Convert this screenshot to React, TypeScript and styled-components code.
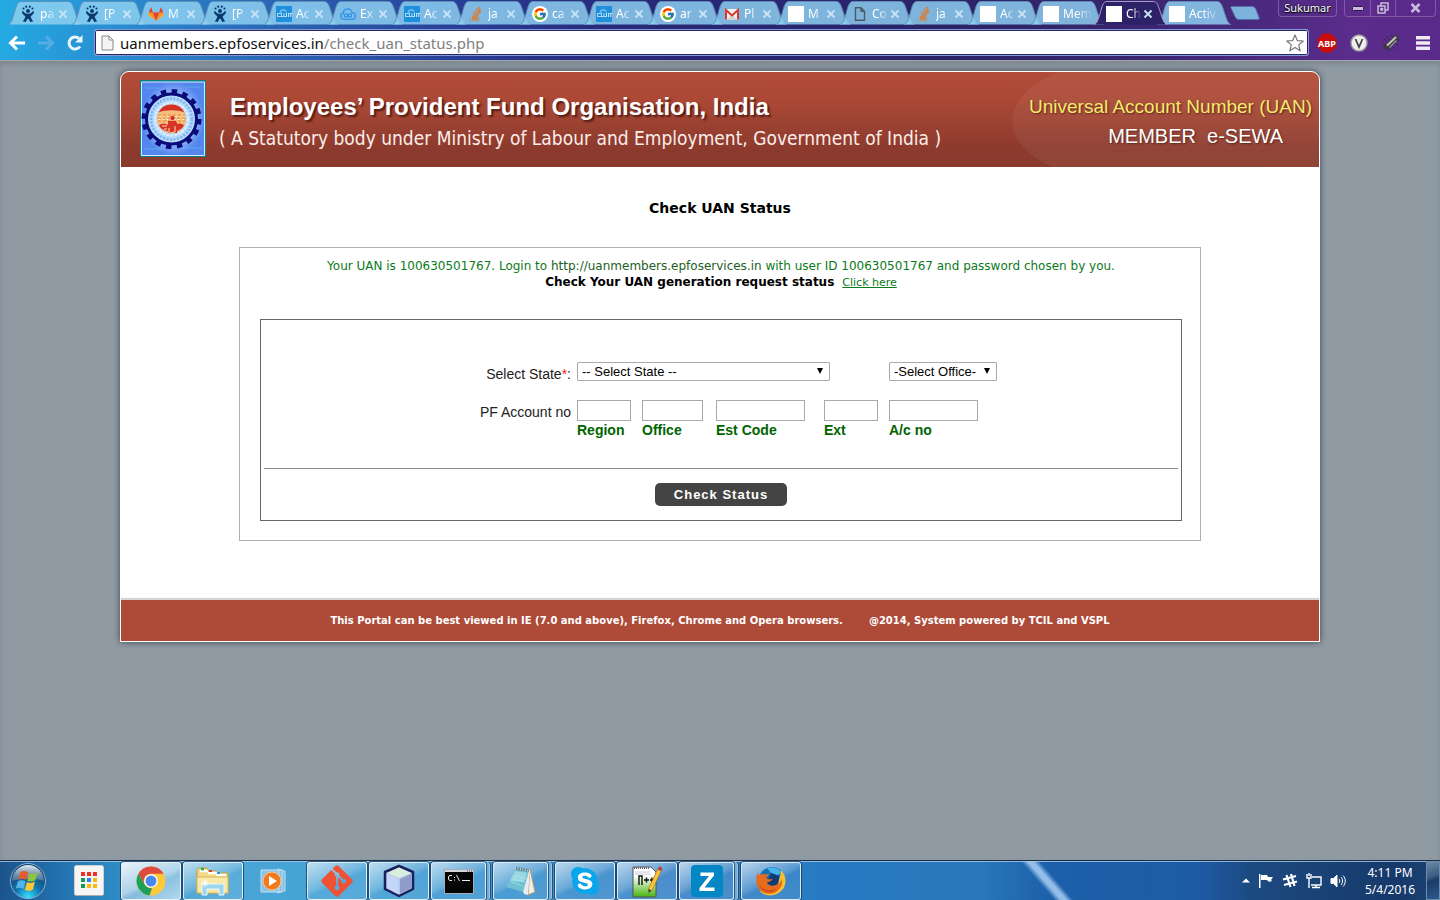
import React from "react";
import styled, { createGlobalStyle, css } from "styled-components";
import { FcGoogle } from "react-icons/fc";
import { FaGitAlt, FaSkype } from "react-icons/fa";

const ui = `"Noto Sans", "Open Sans", sans-serif`;
const arial = `"Liberation Sans", Arial, sans-serif`;
const verdana = `"DejaVu Sans", Verdana, sans-serif`;
const lucida = `"DejaVu Sans Condensed", "Lucida Sans", sans-serif`;

const GlobalStyle = createGlobalStyle`
  *, *::before, *::after { box-sizing: border-box; }
  body { margin: 0; background: #8f9aa3; }
  button, input, select { font: inherit; margin: 0; padding: 0; border: 0; background: none; color: inherit; }
  svg { display: block; flex: none; }
`;

const Screen = styled.div`
  min-height: 100vh;
  display: flex;
  flex-direction: column;
`;

/* ---------- browser frame ---------- */

const BrowserFrame = styled.header`
  background: linear-gradient(90deg, #24aae2 0%, #2a86cc 10%, #2a58aa 23%, #283c94 33%, #28287a 43%, #2a2368 65%, #35246c 76%, #4c2a80 88%, #5b2c8c 94%, #5a2a8a 100%);
  border-bottom: 1px solid #a3a3a8;
  font-family: ${ui};
`;

const TabStrip = styled.div`
  display: flex;
  height: 25px;
  padding-left: 8px;
`;

const Tab = styled.button<{ $active?: boolean; $narrow?: boolean; $open?: boolean }>`
  position: relative;
  flex: 0 0 auto;
  width: ${(p) => (p.$narrow ? 73 : 74)}px;
  height: 25px;
  margin-right: -10px;
  padding: 2px ${(p) => (p.$open ? 8 : 14)}px 0 12px;
  display: flex;
  align-items: center;
  z-index: ${(p) => (p.$active ? 2 : 1)};
  text-align: left;
`;

const TabShape = styled.svg`
  position: absolute;
  inset: 0;
  width: 100%;
  height: 100%;
  z-index: -1;
`;

const TabTitle = styled.span`
  flex: 1 1 0;
  min-width: 0;
  margin: 0 1px 0 4px;
  overflow: hidden;
  white-space: nowrap;
  font-size: 12px;
  line-height: 18px;
  color: #fff;
  mask-image: linear-gradient(90deg, #000 40%, transparent 95%);
`;

const NewTab = styled.button`
  width: 30px;
  height: 14px;
  margin: 6px 0 0 9px;
`;

const WindowTools = styled.div`
  display: flex;
  align-items: flex-start;
  gap: 7px;
  margin-left: auto;
  padding-right: 4px;
`;

const frameButton = css`
  border: 1px solid #7d5aa4;
  border-top: 0;
  color: #d8cdea;
  height: 17px;
`;

const UserButton = styled.button`
  ${frameButton}
  width: 59px;
  border-radius: 0 0 4px 4px;
  color: #fff;
  font-size: 11px;
  line-height: 16px;
  text-shadow: 0 0 2px #000, 0 1px 1px #000;
`;

const WindowButtons = styled.div`
  ${frameButton}
  display: flex;
  border-radius: 0 0 4px 4px;
`;

const WindowButton = styled.button<{ $wide?: boolean }>`
  width: ${(p) => (p.$wide ? 40 : 25)}px;
  display: grid;
  place-items: center;
  & + & { border-left: 1px solid #7d5aa4; }
`;

const Toolbar = styled.div`
  display: flex;
  align-items: center;
  height: 35px;
  padding: 0 7px;
`;

const NavButton = styled.button`
  width: 20px;
  height: 20px;
  margin-right: 9px;
  display: grid;
  place-items: center;
`;

const AddressBar = styled.div`
  flex: 1;
  height: 27px;
  display: flex;
  align-items: center;
  gap: 6px;
  padding: 0 3px 0 6px;
  background: #fff;
  border: 1px solid #7f9bd0;
  border-radius: 3px;
  box-shadow: inset 0 0 0 1px #2a2468;
`;

const Url = styled.span`
  flex: 1;
  font-size: 15px;
  line-height: 20px;
  color: #808080;
  b { font-weight: 400; color: #111; }
`;

const IconButton = styled.button`
  width: 20px;
  height: 20px;
  display: grid;
  place-items: center;
`;

const Extensions = styled.div`
  display: flex;
  gap: 12px;
  margin-left: 8px;
`;

/* ---------- portal page ---------- */

const PageArea = styled.main`
  flex: 1;
  padding: 10px 24px;
  box-shadow: inset 0 3px 4px rgba(70, 80, 90, 0.25);
`;

const Sheet = styled.div`
  max-width: 1200px;
  margin: 0 auto;
  background: #fff;
  border: 1px solid #fff;
  border-radius: 9px 9px 0 0;
  box-shadow: 0 0 6px rgba(30, 40, 50, 0.75);
`;

const Banner = styled.header`
  display: flex;
  min-height: 95px;
  background: linear-gradient(#b04c38 0%, #ac4936 28%, #8b3a2d 82%, #8b3a2d 100%);
  border-radius: 8px 8px 0 0;
  overflow: hidden;
  color: #fff;
`;

const LogoLink = styled.a`
  margin: 8px 0 0 19px;
  height: 77px;
`;

const BannerText = styled.div`
  flex: 1;
  padding: 20px 0 0 13px;
  white-space: nowrap;
`;

const OrgName = styled.h1`
  margin: 0 0 3px;
  padding-left: 11px;
  font: 700 24px/30px ${arial};
  text-shadow: 2px 2px 2px rgba(50, 10, 5, 0.7);
`;

const OrgNote = styled.p`
  margin: 0;
  font: 400 19px/26px ${lucida};
  color: #fbeeea;
`;

const Sewa = styled.div`
  width: 307px;
  padding: 21px 7px 0 0;
  text-align: right;
  white-space: pre;
  text-shadow: 1px 1px 2px rgba(50, 10, 5, 0.6);
  background:
    radial-gradient(110px 60px at 110px 49px, rgba(255, 255, 255, 0.05) 99%, transparent 100%) 0 0 / 110px 100% no-repeat,
    linear-gradient(rgba(255, 255, 255, 0.05), rgba(255, 255, 255, 0.05)) 110px 0 no-repeat;
`;

const SewaTitle = styled.p`
  margin: 0;
  font: 400 19px/28px ${arial};
  color: #f3ea6c;
`;

const SewaName = styled.p`
  margin: 0;
  padding-right: 29px;
  font: 400 20px/30px ${arial};
`;

const Content = styled.section`
  padding: 32px 24px 59px;
`;

const PageTitle = styled.h2`
  margin: 0 0 30px;
  text-align: center;
  font: 700 14px/18px ${verdana};
  color: #000;
`;

const Panel = styled.div`
  max-width: 962px;
  margin: 0 auto;
  padding: 10px 18px 19px 20px;
  border: 1px solid #b0b0b0;
`;

const Message = styled.p`
  margin: 0;
  text-align: center;
  font: 400 12px/16px ${verdana};
  color: #0b7a1c;
  span { color: #22601f; }
  strong { color: #000; margin-right: 8px; }
  a { color: #0b7a1c; font-size: 11px; line-height: 12px; }
`;

const FormBox = styled.form`
  margin-top: 29px;
  padding: 42px 3px 14px;
  border: 1px solid #666;
  font: 400 14px/18px ${arial};
  color: #222;
`;

const Fields = styled.div`
  display: grid;
  grid-template-columns: 79fr 65px 74px 108px 65px 108px 46fr;
  margin: 0 -3px;
  row-gap: 17px;
`;

const RowLabel = styled.label`
  padding: 3px 6px 0 0;
  text-align: right;
  i { font-style: normal; color: #e22; }
`;

const SelectWrap = styled.div<{ $from: number; $to: number; $width: number }>`
  position: relative;
  grid-column: ${(p) => p.$from} / ${(p) => p.$to};
  width: ${(p) => p.$width}px;
  height: 19px;
  select {
    appearance: none;
    display: block;
    width: 100%;
    height: 19px;
    padding: 0 16px 0 4px;
    border: 1px solid #a9a9a9;
    border-radius: 1px;
    background: #fff;
    color: #000;
    font: 400 13px/17px ${arial};
  }
  svg { position: absolute; right: 7px; top: 6px; pointer-events: none; }
`;

const Field = styled.label<{ $width: number }>`
  font: 700 14px/18px ${arial};
  color: #006400;
  white-space: nowrap;
  input {
    display: block;
    width: ${(p) => p.$width}px;
    height: 21px;
    padding: 1px 4px;
    border: 1px solid #a9a9a9;
    background: #fff;
  }
`;

const Rule = styled.hr`
  margin: 29px 0 14px;
  border: 0;
  border-top: 1px solid #8c8c8c;
`;

const SubmitButton = styled.button`
  display: block;
  margin: 0 auto;
  width: 132px;
  height: 23px;
  border-radius: 5px;
  background: #444;
  color: #fff;
  font: 700 13px/23px ${arial};
  letter-spacing: 1px;
`;

const Footer = styled.footer`
  display: flex;
  justify-content: center;
  gap: 26px;
  padding: 12px;
  background: #ad4a38;
  box-shadow: 0 -2px 1px #d5d5d5;
  color: #fff;
  font: 700 10px/17px ${verdana};
`;

/* ---------- desktop taskbar ---------- */

const Taskbar = styled.nav`
  display: flex;
  align-items: stretch;
  height: 40px;
  padding-left: 9px;
  border-top: 1px solid #1b2d44;
  box-shadow: inset 0 1px 0 rgba(170, 205, 235, 0.8);
  background:
    linear-gradient(49deg, transparent 45%, rgba(160, 200, 240, 0.9) 49%, rgba(160, 200, 240, 0.9) 52%, transparent 56%) 75% 0 / 138px 100% no-repeat,
    linear-gradient(90deg, #1c548b 0%, #2371ae 4%, #2b86c0 7%, #4aa6d6 15%, #45a2d6 24%, #3b93cf 36%, #3a82c6 48%, #267bc3 57%, #2a77bb 68%, #1c60aa 73%, #1d5ba6 83%, #1c4a80 87%, #16396a 97%, #1c4474 100%);
  font-family: ${ui};
`;

const Launcher = styled.button<{ $width: number }>`
  width: ${(p) => p.$width}px;
  display: grid;
  place-items: center;
  & + & { margin-left: 12px; }
`;

const TaskList = styled.div`
  display: flex;
  gap: 2px;
  margin-left: 2px;
`;

const Task = styled.button<{ $kind?: "plain" | "active" | "stack" }>`
  width: 60px;
  height: 38px;
  margin-top: 1px;
  display: grid;
  place-items: center;
  border-radius: 3px;
  ${(p) =>
    p.$kind !== "plain" &&
    css`
      border: 1px solid rgba(235, 247, 255, 0.85);
      box-shadow: 0 0 0 1px rgba(15, 45, 80, 0.7);
      background: linear-gradient(155deg, rgba(255, 255, 255, 0.65) 0%, rgba(255, 255, 255, 0.25) 45%, rgba(255, 255, 255, 0.08) 55%, rgba(255, 255, 255, 0.12) 100%);
    `}
  ${(p) =>
    p.$kind === "active" &&
    css`
      background: linear-gradient(155deg, rgba(255, 255, 255, 0.9) 0%, rgba(255, 255, 255, 0.6) 50%, rgba(255, 255, 255, 0.4) 60%, rgba(255, 255, 255, 0.6) 100%);
    `}
  ${(p) =>
    p.$kind === "stack" &&
    css`
      width: 55px;
      margin-right: 5px;
      box-shadow: 0 0 0 1px rgba(15, 45, 80, 0.7), 3px 0 0 0 rgba(110, 175, 220, 1), 4px 0 0 0 rgba(225, 240, 255, 0.7), 5px 0 0 0 rgba(15, 45, 80, 0.6);
    `}
`;

const Tray = styled.div`
  display: flex;
  align-items: center;
  gap: 8px;
  margin-left: auto;
`;

const Clock = styled.time`
  width: 72px;
  text-align: center;
  color: #fff;
  font-size: 12px;
  line-height: 17px;
`;

const ShowDesktop = styled.button`
  width: 14px;
  align-self: stretch;
  margin-left: -8px;
  border: 1px solid #6d8cab;
  background: linear-gradient(160deg, #6f8ba8 0%, #3a5c82 40%, #1b3c66 50%, #2a5a90 100%);
`;

/* ---------- icons ---------- */

const Jira = () => (
  <svg width="16" height="18" viewBox="0 0 16 18" fill="#0a3a6e">
    <circle cx="8" cy="6" r="2" />
    <circle cx="3.5" cy="3.5" r="1.1" /><circle cx="6.2" cy="1.7" r="1.1" /><circle cx="9.8" cy="1.7" r="1.1" /><circle cx="12.5" cy="3.5" r="1.1" />
    <path d="M2 6.5c1-.8 2.200.2 2.500 1.200C6 9 10 9 11.500 7.700 11.800 6.700 13 5.700 14 6.500c0 2-1.500 3.800-3.300 4.700.3 2.300 1.300 3.600 2.500 5.300l-3 .5c-.6-1.500-1.200-2.700-2.200-3.700-1 1-1.600 2.200-2.200 3.700l-3-.5c1.200-1.700 2.200-3 2.500-5.300C3.500 10.300 2 8.500 2 6.500z" />
  </svg>
);
const Gitlab = () => (
  <svg width="16" height="16" viewBox="0 0 16 16">
    <path d="M3 1l2.200 6H.8zM13 1l2.200 6h-4.400z" fill="#e24329" />
    <path d="M.8 6.500L8 15 5.200 6.500zM15.200 6.500L8 15l2.800-8.500z" fill="#fc8a26" />
    <path d="M5 6.500h6L8 15z" fill="#e24329" />
    <path d="M.8 6.500L0 9.200 8 15zM15.200 6.500l.8 2.700L8 15z" fill="#fca326" />
  </svg>
);
const Kit = () => (
  <svg width="16" height="16" viewBox="0 0 16 16">
    <path fill="#1f8fdc" d="M0 0h16v16H0z" />
    <path d="M4 6.500L5.500 4H9l1.500 2.500M1 7.500h5M1 10.500h9M1.500 7v4M5.500 6.500v4M8 7v4" fill="none" stroke="#a9d8f7" />
    <path d="M10.500 7v4M12.500 7v4M13.500 7.500H16M14.800 7.500V11" fill="none" stroke="#cfe9fb" />
  </svg>
);
const Cloud = () => (
  <svg width="16" height="16" viewBox="0 0 16 16" fill="none" stroke="#2f93ea" strokeWidth="1.300">
    <path d="M3.800 13.300C-.5 12.800 0 7.500 3.200 7.300 3.500 1.500 11 1.500 12 6.700c4.500.3 4.700 6.300.3 6.600z" />
    <circle cx="6" cy="9.500" r="1.700" /><circle cx="10" cy="9.500" r="1.700" />
  </svg>
);
const Stack = () => (
  <svg width="16" height="16" viewBox="0 0 16 16" fill="none" strokeWidth="1.400">
    <path d="M2 10.500V15h9.500v-4.500" stroke="#9aa3a8" />
    <path d="M4 13h6M4 10.800l6 .6M4.500 8.300l5.700 1.600M5.700 5.500l5.100 3M8 2.700l3.700 4.600M11 1l1.500 5.500" stroke="#e57520" />
  </svg>
);
const GoogleTab = () => (
  <svg width="16" height="16" viewBox="0 0 16 16">
    <circle cx="8" cy="8" r="8" fill="#fff" />
    <FcGoogle x="1" y="1" size={14} />
  </svg>
);
const Gmail = () => (
  <svg width="16" height="16" viewBox="0 0 16 16">
    <path d="M1 3h14v10.500H1z" fill="#f0f0f0" />
    <path d="M3 13.500l5-5 5 5z" fill="#d5d5d5" />
    <path d="M2 13.500V4l6 5.500L14 4v9.500" fill="none" stroke="#d8392b" strokeWidth="2" />
  </svg>
);
const Blank = () => (
  <svg width="16" height="16" viewBox="0 0 16 16"><path fill="#fff" d="M0 0h16v16H0z" /></svg>
);
const Doc = () => (
  <svg width="16" height="16" viewBox="0 0 16 16" fill="none" stroke="#4c5a63" strokeWidth="1.400">
    <path d="M3.500 1.700h5.500l3.500 3.600v9h-9zM9 1.700v3.600h3.500" />
  </svg>
);

const CloseMark = () => (
  <svg width="10" height="10" viewBox="0 0 10 10" stroke="#c9e2f3" strokeWidth="1.800">
    <path d="M1.500 1.500l7 7M8.500 1.500l-7 7" />
  </svg>
);

type TabInfo = { icon: React.FC; title: string; active?: boolean; open?: boolean; narrow?: boolean };
const tabs: TabInfo[] = [
  { icon: Jira, title: "pa" },
  { icon: Jira, title: "[P" },
  { icon: Gitlab, title: "M" },
  { icon: Jira, title: "[P" },
  { icon: Kit, title: "Ac" },
  { icon: Cloud, title: "Ex" },
  { icon: Kit, title: "Ac" },
  { icon: Stack, title: "ja" },
  { icon: GoogleTab, title: "ca" },
  { icon: Kit, title: "Ac" },
  { icon: GoogleTab, title: "ar" },
  { icon: Gmail, title: "Pl" },
  { icon: Blank, title: "M" },
  { icon: Doc, title: "Co" },
  { icon: Stack, title: "ja" },
  { icon: Blank, title: "Ac", narrow: true },
  { icon: Blank, title: "Mem", open: true, narrow: true },
  { icon: Blank, title: "Ch", active: true, narrow: true },
  { icon: Blank, title: "Activ", open: true },
];

const BrowserTab = ({ icon: Icon, title, active, open, narrow }: TabInfo) => (
  <Tab type="button" $active={active} $narrow={narrow} $open={open}>
    <TabShape viewBox="0 0 74 25" preserveAspectRatio="none">
      <path
        d="M0 24.500C3 24 4 20 6 14 8 7 9 1.500 13 1.500H60c4 0 5 4 7 10s4 13 7 13"
        fill={active ? "#2d2268" : "rgba(143,209,242,.84)"}
        stroke={active ? "#a79cc4" : "#5f8fb4"}
      />
    </TabShape>
    <Icon />
    <TabTitle>{title}</TabTitle>
    {!open && <CloseMark />}
  </Tab>
);

const Emblem = () => (
  <svg width="66" height="77" viewBox="0 0 66 77" role="img" aria-label="EPFO emblem">
    <defs>
      <radialGradient id="sky"><stop offset="0" stopColor="#d5ecff" /><stop offset=".6" stopColor="#9dc0fa" /><stop offset="1" stopColor="#5585ee" /></radialGradient>
    </defs>
    <path fill="#0b8087" d="M0 0h66v77H0z" />
    <path fill="url(#sky)" stroke="#dbe9fa" d="M1.500 2h63v73.500h-63z" />
    <path d="M4 69h20M42 68h20M6 8h14M46 7h14" stroke="#63c3f4" strokeOpacity=".6" />
    <circle cx="31.500" cy="39" r="27.500" fill="none" stroke="#0a0a78" strokeWidth="5" strokeDasharray="5.400 5.400" />
    <circle cx="31.500" cy="39" r="25" fill="#b5d9fb" stroke="#0a0a78" strokeWidth="3" />
    <circle cx="31.500" cy="39" r="20.500" fill="none" stroke="#7db4ee" strokeWidth="2.500" strokeDasharray="2 1.500" />
    <circle cx="31.500" cy="39" r="16.500" fill="none" stroke="#dcf0ff" strokeWidth="2" strokeDasharray="3 1" />
    <circle cx="31.500" cy="39" r="14.500" fill="#f6bd7c" />
    <path d="M18.500 32.500a14.500 14.500 0 0 1 26 0c-6-3-20-3-26 0z" fill="#d53124" />
    <path d="M19 45c3-2 6-2 9 0l3-3 4 3c3-2 6-2 9 0-3 9-22 9-25 0z" fill="#d53124" />
    <path d="M18 35h27M17.500 38h28M18 41h27" stroke="#e8862f" strokeDasharray="3 2" />
    <path d="M19 36.500h26M18 39.500h28" stroke="#fbe9cc" strokeDasharray="2 2" />
    <circle cx="32.500" cy="38" r="2.200" fill="#d9332a" />
    <path d="M28 41h8l2 4-1 8h-2l-2-6-3 6h-2z" fill="#d9332a" />
    <path d="M29 48v5M35 46v6M22 46h5M24 49h3" stroke="#fce2b4" />
  </svg>
);

const Orb = () => (
  <svg width="38" height="38" viewBox="0 0 38 38">
    <defs>
      <radialGradient id="orb" cx=".5" cy=".95" r=".8"><stop offset="0" stopColor="#35e0ff" /><stop offset=".45" stopColor="#1276b0" /><stop offset="1" stopColor="#113d66" /></radialGradient>
      <linearGradient id="gloss" x2="0" y2="1"><stop offset="0" stopColor="#e2edf5" /><stop offset="1" stopColor="#7693ab" stopOpacity=".5" /></linearGradient>
    </defs>
    <circle cx="19" cy="19" r="17.500" fill="url(#orb)" stroke="#86b5d8" />
    <path d="M3 19a16 16 0 0 1 32 0c-9-3-22-3-32 0z" fill="url(#gloss)" />
    <path d="M11.500 10c3-1.500 5-1 7.500.3l-2 7.700c-2.500-1.300-5-1.600-7.700-.3z" fill="#e9592a" />
    <path d="M20.300 11c2.700 1.200 5.200 1.200 8.200-.5l-2.200 8c-2.800 1.500-5.300 1.300-8 .2z" fill="#8cc63c" />
    <path d="M9 19c2.800-1.300 5-1 7.600.3l-2 7.500c-2.600-1.300-5-1.500-7.800-.3z" fill="#54b2ec" />
    <path d="M18 20c2.700 1.200 5 1.200 8-.2l-2.200 8c-2.800 1.400-5.200 1.200-7.900 0z" fill="#fdc82f" />
  </svg>
);
const AppGrid = () => (
  <svg width="30" height="32" viewBox="0 0 30 32">
    <rect x=".5" y=".5" width="29" height="30" rx="2" fill="#f5f5f5" stroke="#d0d0d0" />
    <path d="M1 30.500h28" stroke="#aaa" />
    {["#ee3124", "#ee3124", "#ee3124", "#109d58", "#2f7ef0", "#f9b90c", "#109d58", "#f9b90c", "#f9b90c"].map((c, i) => (
      <rect key={i} x={7 + (i % 3) * 6} y={7 + Math.floor(i / 3) * 6} width="4" height="4" fill={c} />
    ))}
  </svg>
);
const Chrome = () => (
  <svg width="30" height="30" viewBox="0 0 30 30">
    <circle cx="15" cy="15" r="14.500" fill="#fdc93a" />
    <path d="M2.400 7.800a14.500 14.500 0 0 1 25.200 0H15a7.200 7.200 0 0 0-6.500 10.500z" fill="#de4b3e" />
    <path d="M2.400 7.800l6.300 10.800c1.500 2.600 4 3.800 7.300 3.600L13.500 29.400A14.500 14.500 0 0 1 2.400 7.800z" fill="#1ea05a" />
    <circle cx="15" cy="15" r="6.800" fill="#fff" /><circle cx="15" cy="15" r="5.500" fill="#4787ee" />
  </svg>
);
const Explorer = () => (
  <svg width="34" height="30" viewBox="0 0 34 30">
    <path d="M1 27V4l2-2h8l1 3h8l1 2h11v20z" fill="#f1d987" stroke="#c9a23d" />
    <path d="M4 5h8M12 7h9M20 9h10" stroke="#fff" strokeWidth="2.500" />
    <path d="M5 3h3" stroke="#19b341" strokeWidth="2.500" /><path d="M13 5h3" stroke="#d94126" strokeWidth="2" /><path d="M21 7h3" stroke="#2196e0" strokeWidth="2" />
    <path d="M1 11h31v16H1z" fill="#f8e9a9" stroke="#d6b656" />
    <path d="M6 29V18h22v11h-5v-6H11v6z" fill="#9bd5f0" stroke="#e6f8ff" />
    <path d="M9 13v8M5 17h8M6.500 14.500l5 5M11.500 14.500l-5 5" stroke="#fff" />
  </svg>
);
const Media = () => (
  <svg width="30" height="26" viewBox="0 0 30 26">
    <path d="M20 2l5 1v20l-5 1M17 1l5 1v22l-5 1" fill="#85bedf" stroke="#b9dff2" />
    <path d="M1 2h18v22H1z" fill="#8ac4e4" stroke="#c3e4f4" />
    <circle cx="12" cy="13" r="9" fill="#f27a1b" stroke="#fac894" />
    <path d="M9 8l8 5-8 5z" fill="#fff" />
  </svg>
);
const Git = () => <FaGitAlt size={36} color="#f05133" />;
const Cube = () => (
  <svg width="32" height="34" viewBox="0 0 32 34">
    <path d="M16 2l14 6v17l-14 7L2 25V8z" fill="#b6cbef" stroke="#1b1f5c" strokeWidth="2.500" strokeLinejoin="round" />
    <path d="M16 3.500L28 9l-12 5L4 9z" fill="#d8eedd" /><path d="M17 15l11-5v14l-11 6z" fill="#8e9cc9" /><path d="M15 15L4 10v14l11 6z" fill="#c5d7f8" />
  </svg>
);
const Cmd = () => (
  <svg width="30" height="25" viewBox="0 0 30 25">
    <path d="M.5.500h29v24H.5z" fill="#050505" stroke="#a6adb3" /><path d="M1 2h28" stroke="#d3d8dc" strokeWidth="2" />
    <path d="M23 2h1M25 2h1M27 2h1" stroke="#444" />
    <path d="M8 6.500H5.500L4.500 8v2l1 1.500H8M10.500 8v1M10.500 10.500v1M12.500 6l3 6M18 11.500h8" fill="none" stroke="#eee" />
  </svg>
);
const Notepad = () => (
  <svg width="32" height="30" viewBox="0 0 32 30">
    <path d="M25 3l5 23-7 3z" fill="#f0f0e8" stroke="#b79f6a" /><path d="M10 2l15 2-2 25-4-1z" fill="#e7edf0" />
    <path d="M11 3l13 2-6 21L1 21z" fill="#6fc1d2" /><path d="M10 5l12 2-3 9L5 15z" fill="#9bd9e2" /><path d="M10 10l12 3M8 13l12 3M6 16l12 4" stroke="#b7e6ec" strokeOpacity=".6" />
    <path d="M11 2.500l13 2" stroke="#65777f" strokeWidth="3" strokeDasharray="1.500 1" />
  </svg>
);
const Skype = () => (
  <svg width="32" height="32" viewBox="0 0 32 32">
    <circle cx="16" cy="16" r="11" fill="#fff" /><FaSkype x="0" y="0" size={32} color="#0aa5ea" />
  </svg>
);
const NotepadPP = () => (
  <svg width="30" height="33" viewBox="0 0 30 33">
    <defs><linearGradient id="npp" x2="0" y2="1"><stop offset=".3" stopColor="#fff" /><stop offset="1" stopColor="#48b50d" /></linearGradient></defs>
    <path d="M1 2h18l5 5v25H1z" fill="url(#npp)" stroke="#555" /><path d="M2 3h16" stroke="#666" strokeWidth="2" strokeDasharray="1 1" />
    <path d="M3 7h15M3 9h15" stroke="#ccd" /><path d="M7 20v-9h3v9M12 15h5M14.500 12.500v5M18 15h4M20 12.500v5" fill="none" stroke="#111" strokeWidth="1.400" />
    <path d="M28 4L18 25" stroke="#b87d16" strokeWidth="4.500" /><path d="M28 4L18 25" stroke="#fac441" strokeWidth="3" /><path d="M29 2l-1.500 3.500" stroke="#b34254" strokeWidth="4" /><path d="M16.500 24l3 1.500-3 2.500z" fill="#333" />
  </svg>
);
const ZApp = () => (
  <svg width="32" height="32" viewBox="0 0 32 32">
    <rect width="32" height="32" rx="4" fill="#0386c4" />
    <path d="M9.500 7.500H23v3L13.500 22.500h10V26H8.500v-3L18 11H9.500z" fill="#fff" />
  </svg>
);
const Firefox = () => (
  <svg width="32" height="32" viewBox="0 0 32 32">
    <circle cx="17" cy="15" r="13" fill="#1670b8" /><path d="M12 3c6-2 12 0 15 5l-5 2-6-2z" fill="#45b4e8" /><path d="M16 8l8 3 1 8-6 4-7-5z" fill="#123c78" />
    <path d="M26 5c6 6 6 16 0 21-6 6-17 6-22-1 8 4 19-1 20-10 1-4 2-6 2-10z" fill="#fbc02e" />
    <path d="M3 7c0 2 .5 3 1.200 3.500C7 8.500 9 9 11 9.500c1 0 2-1 3-1-.5 2-2 3-2.800 4.200 1.500 2.300 4 1.600 6.300 1-1 3-4 3-6 4 3 4.500 9 3 12 1 1-1 3-3 3-5 2 5-1 10-5 13-6 4-15 2-18.500-4C.5 17.500 1 11 3 7z" fill="#e66b1c" />
    <path d="M4 19c3 6 10 8 17 5-5 6-15 3-17-5z" fill="#d04a1c" />
  </svg>
);

type TaskInfo = { name: string; icon: React.FC; kind?: "plain" | "active" | "stack" };
const tasks: TaskInfo[] = [
  { name: "Chrome", icon: Chrome, kind: "active" },
  { name: "Explorer", icon: Explorer },
  { name: "Media Player", icon: Media, kind: "plain" },
  { name: "Git", icon: Git },
  { name: "NetBeans", icon: Cube },
  { name: "Command Prompt", icon: Cmd, kind: "stack" },
  { name: "Notepad", icon: Notepad, kind: "stack" },
  { name: "Skype", icon: Skype },
  { name: "Notepad++", icon: NotepadPP },
  { name: "Z", icon: ZApp, kind: "stack" },
  { name: "Firefox", icon: Firefox },
];

const Arrow = () => (
  <svg width="6" height="6" viewBox="0 0 6 6"><path d="M0 0h6L3 6z" fill="#000" /></svg>
);

const accountFields = [
  { label: "Region", width: 54 },
  { label: "Office", width: 61 },
  { label: "Est Code", width: 89 },
  { label: "Ext", width: 54 },
  { label: "A/c no", width: 89 },
];

export default function App() {
  return (
    <Screen>
      <GlobalStyle />
      <BrowserFrame>
        <TabStrip>
          {tabs.map((t, i) => <BrowserTab key={i} {...t} />)}
          <NewTab type="button" aria-label="New tab">
            <svg width="30" height="14" viewBox="0 0 30 14"><path d="M2 .5h20c2 0 3 1 4 3l3 8c.5 1.500 0 2-1 2H9c-2 0-3-1-4-3L1 2C.500 1 1 .5 2 .5z" fill="#7cb3dc" stroke="#5c6fa8" /></svg>
          </NewTab>
          <WindowTools>
            <UserButton type="button">Sukumar</UserButton>
            <WindowButtons>
              <WindowButton type="button" aria-label="Minimize">
                <svg width="12" height="5" viewBox="0 0 12 5"><rect x=".5" y=".5" width="11" height="4" rx="1" fill="#c9bcdc" stroke="#30174f" /></svg>
              </WindowButton>
              <WindowButton type="button" aria-label="Restore">
                <svg width="12" height="12" viewBox="0 0 12 12" fill="none" stroke="#c9bcdc" strokeWidth="1.500"><path d="M4 3.500V1h7v7H8.500M1 4h7v7H1zM4 6.500h1.500V8H4z" /></svg>
              </WindowButton>
              <WindowButton type="button" $wide aria-label="Close">
                <svg width="11" height="10" viewBox="0 0 11 10" stroke="#c9bcdc" strokeWidth="2.500"><path d="M1.500 1l8 8M9.500 1l-8 8" /></svg>
              </WindowButton>
            </WindowButtons>
          </WindowTools>
        </TabStrip>
        <Toolbar>
          <NavButton type="button" aria-label="Back">
            <svg width="18" height="16" viewBox="0 0 18 16" fill="none" stroke="#fff" strokeWidth="3"><path d="M17 8H3M9 1.500L2.500 8 9 14.500" /></svg>
          </NavButton>
          <NavButton type="button" aria-label="Forward">
            <svg width="18" height="16" viewBox="0 0 18 16" fill="none" stroke="#55ade2" strokeWidth="3"><path d="M1 8h14M9 1.500L15.500 8 9 14.500" /></svg>
          </NavButton>
          <NavButton type="button" aria-label="Reload">
            <svg width="18" height="18" viewBox="0 0 18 18" fill="none" stroke="#e8f6ff" strokeWidth="3"><path d="M14 12.500A6 6 0 1 1 13 4.500" /><path d="M16.500 1v7.500H9z" fill="#e8f6ff" stroke="none" /></svg>
          </NavButton>
          <AddressBar>
            <svg width="13" height="16" viewBox="0 0 13 16" fill="#f4f4f4" stroke="#8a8a8a"><path d="M1 1h7l4 4v10H1zM8 1v4h4" /></svg>
            <Url><b>uanmembers.epfoservices.in</b>/check_uan_status.php</Url>
            <IconButton type="button" aria-label="Bookmark">
              <svg width="18" height="18" viewBox="0 0 18 18" fill="#fff" stroke="#777" strokeWidth="1.200" strokeLinejoin="round"><path d="M9 1l2.300 5.600 6 .4-4.600 3.900 1.500 5.900L9 13.600l-5.200 3.200 1.500-5.900L.7 7l6-.4z" /></svg>
            </IconButton>
          </AddressBar>
          <Extensions>
            <IconButton type="button" aria-label="ABP">
              <svg width="20" height="20" viewBox="0 0 20 20"><path d="M6 .5h8L19.500 6v8L14 19.500H6L.5 14V6z" fill="#c70d0d" /><text x="10" y="13.500" textAnchor="middle" fontFamily="Noto Sans, sans-serif" fontWeight="700" fontSize="9" fill="#fff">ABP</text></svg>
            </IconButton>
            <IconButton type="button" aria-label="V">
              <svg width="18" height="18" viewBox="0 0 18 18"><circle cx="9" cy="9" r="8" fill="#eee" stroke="#9c9c9c" strokeWidth="1.500" /><path d="M5.500 5L9 13l3.500-8" fill="none" stroke="#444" strokeWidth="1.800" /></svg>
            </IconButton>
            <IconButton type="button" aria-label="Debugger">
              <svg width="20" height="20" viewBox="0 0 20 20"><path d="M3 6l3 3M6 3l3 4M14 16l-2-3M17 12l-4-2M2 12h4M9 18v-4M10 2l2 3M18 7l-3 1" stroke="#2b2238" strokeDasharray="2 1" /><path d="M15 5L6 14" stroke="#3d3d3d" strokeWidth="6" strokeLinecap="round" /><path d="M15 4L6 12.500" stroke="#c5c5c5" strokeWidth="2" /><path d="M15.500 7.500l-7 7" stroke="#8f8f8f" strokeWidth="1.500" /></svg>
            </IconButton>
            <IconButton type="button" aria-label="Menu">
              <svg width="14" height="14" viewBox="0 0 14 14" fill="#efeaf5"><path d="M0 0h14v3.500H0zM0 5.200h14v3.500H0zM0 10.400h14v3.500H0z" /></svg>
            </IconButton>
          </Extensions>
        </Toolbar>
      </BrowserFrame>

      <PageArea>
        <Sheet>
          <Banner>
            <LogoLink href="#"><Emblem /></LogoLink>
            <BannerText>
              <OrgName>Employees’ Provident Fund Organisation, India</OrgName>
              <OrgNote>( A Statutory body under Ministry of Labour and Employment, Government of India )</OrgNote>
            </BannerText>
            <Sewa>
              <SewaTitle>Universal Account Number (UAN)</SewaTitle>
              <SewaName>{"MEMBER  e-SEWA"}</SewaName>
            </Sewa>
          </Banner>
          <Content>
            <PageTitle>Check UAN Status</PageTitle>
            <Panel>
              <Message>
                Your UAN is 100630501767. Login to <span>http://uanmembers.epfoservices.in</span> with user ID 100630501767 and password chosen by you.
              </Message>
              <Message>
                <strong>Check Your UAN generation request status</strong>
                <a href="#">Click here</a>
              </Message>
              <FormBox>
                <Fields>
                  <RowLabel htmlFor="state">Select State<i>*</i>:</RowLabel>
                  <SelectWrap $from={2} $to={5} $width={253}>
                    <select id="state"><option>-- Select State --</option></select>
                    <Arrow />
                  </SelectWrap>
                  <SelectWrap $from={6} $to={8} $width={108}>
                    <select aria-label="Select Office"><option>-Select Office-</option></select>
                    <Arrow />
                  </SelectWrap>
                  <RowLabel htmlFor="account-0">PF Account no</RowLabel>
                  {accountFields.map((f, i) => (
                    <Field key={f.label} $width={f.width}>
                      <input type="text" id={`account-${i}`} />
                      {f.label}
                    </Field>
                  ))}
                </Fields>
                <Rule />
                <SubmitButton type="button">Check Status</SubmitButton>
              </FormBox>
            </Panel>
          </Content>
          <Footer>
            <span>This Portal can be best viewed in IE (7.0 and above), Firefox, Chrome and Opera browsers.</span>
            <span>@2014, System powered by TCIL and VSPL</span>
          </Footer>
        </Sheet>
      </PageArea>

      <Taskbar>
        <Launcher type="button" $width={38} aria-label="Start"><Orb /></Launcher>
        <Launcher type="button" $width={60} aria-label="Apps"><AppGrid /></Launcher>
        <TaskList>
          {tasks.map(({ name, icon: Icon, kind }) => (
            <Task key={name} type="button" aria-label={name} $kind={kind}><Icon /></Task>
          ))}
        </TaskList>
        <Tray>
          <svg width="8" height="5" viewBox="0 0 8 5"><path d="M0 4.500L4 .5l4 4z" fill="#fff" /></svg>
          <svg width="16" height="16" viewBox="0 0 16 16" fill="#fff"><path d="M1 1h1.500v14H1zM3 2h6l1 2h5l-2 3 1 1c-2 1-4 1-5-1H3z" /></svg>
          <svg width="16" height="16" viewBox="0 0 16 16" fill="none" stroke="#fff" strokeWidth="2.200"><path d="M4.500 2l4 12M9 1l3.500 12M1 6.500L14 3M2 12l13-3.500" /></svg>
          <svg width="16" height="16" viewBox="0 0 16 16" fill="none" stroke="#fff" strokeWidth="1.400"><path d="M6 4h9v8H5M10 12v2M6 14.500h8M1 1v4h4V1M3 0v3M3 5v10" /></svg>
          <svg width="16" height="16" viewBox="0 0 16 16" fill="none" stroke="#fff"><path d="M1 5.500h2.500L7 2v12l-3.500-3.500H1z" fill="#fff" /><path d="M9 6c1 1 1 3 0 4M11 4c2 2 2 6 0 8M13 2.500c3 3 3 8 0 11" /></svg>
          <Clock>4:11 PM<br />5/4/2016</Clock>
          <ShowDesktop type="button" aria-label="Show desktop" />
        </Tray>
      </Taskbar>
    </Screen>
  );
}
